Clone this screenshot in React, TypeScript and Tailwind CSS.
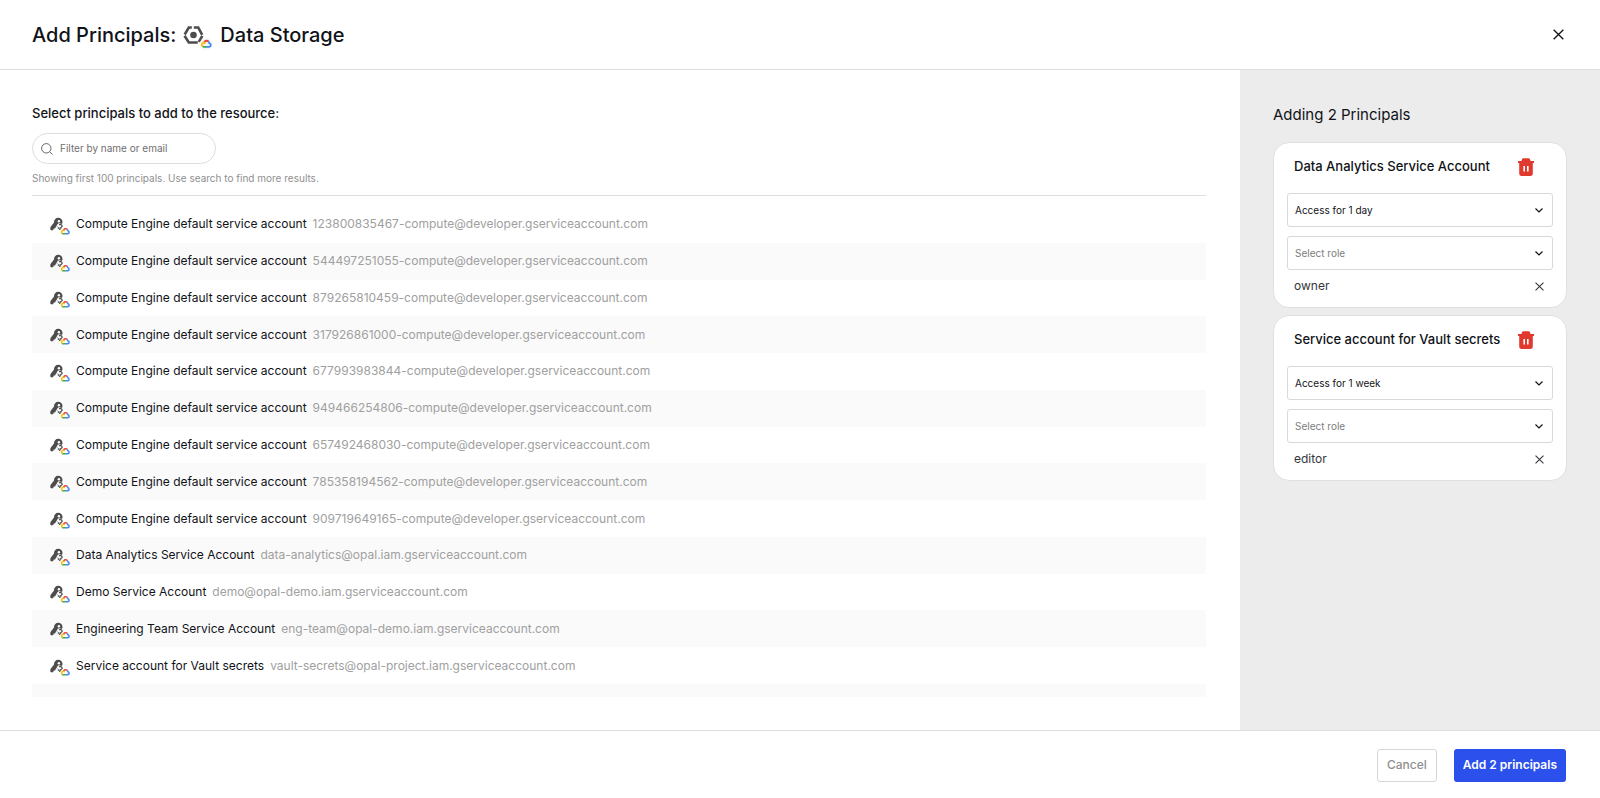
import React from "react";

type Principal = { name: string; email: string };
type Selection = { name: string; access: string; role: string };

const principals: Principal[] = [
  { name: "Compute Engine default service account", email: "123800835467-compute@developer.gserviceaccount.com" },
  { name: "Compute Engine default service account", email: "544497251055-compute@developer.gserviceaccount.com" },
  { name: "Compute Engine default service account", email: "879265810459-compute@developer.gserviceaccount.com" },
  { name: "Compute Engine default service account", email: "317926861000-compute@developer.gserviceaccount.com" },
  { name: "Compute Engine default service account", email: "677993983844-compute@developer.gserviceaccount.com" },
  { name: "Compute Engine default service account", email: "949466254806-compute@developer.gserviceaccount.com" },
  { name: "Compute Engine default service account", email: "657492468030-compute@developer.gserviceaccount.com" },
  { name: "Compute Engine default service account", email: "785358194562-compute@developer.gserviceaccount.com" },
  { name: "Compute Engine default service account", email: "909719649165-compute@developer.gserviceaccount.com" },
  { name: "Data Analytics Service Account", email: "data-analytics@opal.iam.gserviceaccount.com" },
  { name: "Demo Service Account", email: "demo@opal-demo.iam.gserviceaccount.com" },
  { name: "Engineering Team Service Account", email: "eng-team@opal-demo.iam.gserviceaccount.com" },
  { name: "Service account for Vault secrets", email: "vault-secrets@opal-project.iam.gserviceaccount.com" },
];

const selections: Selection[] = [
  { name: "Data Analytics Service Account", access: "Access for 1 day", role: "owner" },
  { name: "Service account for Vault secrets", access: "Access for 1 week", role: "editor" },
];

function CloudLogo({ className }: { className: string }) {
  return (
    <svg viewBox="0 0 24 20" fill="none" strokeWidth="4" className={className} aria-hidden="true">
      <path d="M6.5 8.2A6 6 0 0 1 16.4 5.6" stroke="#ea4335" />
      <path d="M16 5.3A6.2 6.2 0 0 1 18.2 9.3A4.2 4.2 0 0 1 17.8 17.6H12" stroke="#4285f4" />
      <path d="M12.5 17.6H6.4A4.6 4.6 0 0 1 3.4 16.4" stroke="#34a853" />
      <path d="M3.8 16.8A4.7 4.7 0 0 1 7.6 8.4A4.7 4.7 0 0 1 10 9.6" stroke="#fbbc05" />
    </svg>
  );
}

function StorageIcon() {
  return (
    <span className="relative mr-2 ml-[7px] block h-6 w-[29px]">
      <svg viewBox="0 0 21 18" className="mt-[3px] h-[18px] w-[21px]" fill="none" aria-hidden="true">
        <g stroke="#4d4d4d" strokeWidth="2.600">
          <path d="M8.800 1.500H5.800L1.700 8.500" />
          <path d="M10.800 1.500h4.400l4 7.400" />
          <path d="M1.500 9.800l4.300 6.700h9" />
          <path d="M19.300 9.800l-3.500 6" />
        </g>
        <circle cx="10.500" cy="9" r="3.300" fill="#4d4d4d" />
      </svg>
      <span className="absolute right-0 -bottom-[3px] flex h-3 w-3 items-center justify-center rounded-full bg-[#f5f5f5]">
        <CloudLogo className="h-[9px] w-[11px]" />
      </span>
    </span>
  );
}

function ServiceAccountIcon() {
  return (
    <span className="relative block h-5 w-5 shrink-0">
      <svg viewBox="0 0 14 15" className="mt-[3px] h-[15px] w-[14px]" aria-hidden="true">
        <path
          d="M8.200.8A4.200 4.200 0 0 1 12.500 5c0 .8-.2 1.500-.6 2.100L9.500 6.300a2.300 2.300 0 0 0-2.500 2L5.900 9.700l-.8 1.700-1.300.2-.6 1.500-1.500.4L.2 12.600l.3-2.600L4 5.400A4.200 4.200 0 0 1 8.200.8Z"
          fill="#4d4d4d"
        />
        <circle cx="8.900" cy="4.200" r="1.200" fill="#fff" />
        <path
          d="M9.200 8a1.700 1.700 0 1 1 1 2.900L9.600 13"
          fill="none"
          stroke="#4d4d4d"
          strokeWidth="1.300"
        />
        <path d="M7.400 9.600l1.200 1.200-.4 1.200" fill="none" stroke="#4d4d4d" />
      </svg>
      <span className="absolute right-0 -bottom-px flex h-[9px] w-[9px] items-center justify-center rounded-full bg-white/80">
        <CloudLogo className="h-2 w-[9px]" />
      </span>
    </span>
  );
}

function Cross({ className }: { className: string }) {
  return (
    <svg viewBox="0 0 10 10" className={className} fill="none" stroke="currentColor" strokeWidth="1.2" aria-hidden="true">
      <path d="M.6.6l8.800 8.800M9.400.6L.6 9.400" />
    </svg>
  );
}

function TrashIcon() {
  return (
    <svg viewBox="0 0 16 18" className="h-[18px] w-4" aria-hidden="true">
      <path
        fill="#e03a2f"
        fillRule="evenodd"
        d="M5.300.2h5.400c.6 0 1 .3 1.200.8l.7 2H16v2h-1.200V15.600c0 1.400-.9 2.400-2.300 2.400h-9c-1.400 0-2.300-1-2.300-2.400V5H0V3h3.400l.7-2c.2-.5.600-.8 1.200-.8ZM5.400 8v5.400h1.600V8H5.400Zm3.600 0v5.400h1.600V8H9Z"
      />
    </svg>
  );
}

function Dropdown({ label, value, muted }: { label: string; value: string; muted?: boolean }) {
  return (
    <div className="grid items-center">
      <select
        aria-label={label}
        className={
          "col-start-1 row-start-1 h-[34px] w-full appearance-none rounded-[3px] border border-[#d9d9d9] bg-white px-[7px] text-[10px] " +
          (muted ? "text-[#7d7d7d]" : "text-[#111318]")
        }
      >
        <option>{value}</option>
      </select>
      <svg
        viewBox="0 0 8 5"
        className="pointer-events-none col-start-1 row-start-1 mr-[10px] h-[5px] w-2 justify-self-end"
        fill="none"
        stroke="#111318"
        strokeWidth="1.2"
        aria-hidden="true"
      >
        <path d="M.5.5L4 4 7.500.5" />
      </svg>
    </div>
  );
}

function SelectionCard({ item }: { item: Selection }) {
  return (
    <section className="rounded-2xl border border-[#e0e0e0] bg-white px-[13px] pt-[7px] pb-3">
      <div className="flex h-[34px] items-center justify-between pr-[19px] pl-[7px]">
        <h3 className="text-[13px] font-medium whitespace-nowrap">{item.name}</h3>
        <button type="button" aria-label={`Remove ${item.name}`}>
          <TrashIcon />
        </button>
      </div>
      <div className="mt-[9px] flex flex-col gap-[9px]">
        <Dropdown label="Access duration" value={item.access} />
        <Dropdown label="Role" value="Select role" muted />
      </div>
      <div className="mt-[7px] flex h-[18px] items-center justify-between pr-[9px] pl-[7px] text-[12px] text-[#33353a]">
        <span>{item.role}</span>
        <button type="button" aria-label={`Remove role ${item.role}`}>
          <Cross className="size-[9px]" />
        </button>
      </div>
    </section>
  );
}

export default function App() {
  return (
    <div className="flex min-h-screen flex-col bg-white font-[Inter,'Liberation_Sans',sans-serif] text-[#111318]">
      <header className="flex h-[70px] shrink-0 items-center justify-between border-b border-[#dedede] pr-9 pl-8">
        <h1 className="flex items-center text-[20px] leading-7 font-medium">
          <span>Add Principals:</span>
          <StorageIcon />
          <span>Data Storage</span>
        </h1>
        <button type="button" aria-label="Close">
          <Cross className="size-[11px]" />
        </button>
      </header>

      <div className="flex flex-1">
        <main className="flex min-w-0 flex-1 flex-col pt-8 pr-[34px] pb-[33px] pl-8">
          <h2 className="text-[13px] leading-[22px] font-medium">Select principals to add to the resource:</h2>
          <label className="mt-[9px] flex h-[31px] w-[184px] items-center gap-[7px] rounded-full border border-[#dedede] px-2">
            <svg viewBox="0 0 12 12" className="size-3 shrink-0" fill="none" stroke="#666" strokeWidth="1" aria-hidden="true">
              <circle cx="5.300" cy="5.300" r="4.700" />
              <path d="M8.700 8.700l2.800 2.800" />
            </svg>
            <input
              type="text"
              aria-label="Filter by name or email"
              placeholder="Filter by name or email"
              className="min-w-0 flex-1 text-[10px] outline-none placeholder:text-[#6f6f6f]"
            />
          </label>
          <p className="mt-[6px] border-b border-[#dedede] pb-[9px] text-[10px] leading-4 text-[#8f8f8f]">
            Showing first 100 principals. Use search to find more results.
          </p>
          <ul className="mt-[10px] grid flex-1 grid-rows-[repeat(13,minmax(36px,1fr))_13px]">
            {principals.map((p) => (
              <li key={p.email} className="flex items-center pl-[18px] text-[12px] even:bg-[#fafafa]">
                <ServiceAccountIcon />
                <span className="ml-[6px]">{p.name}</span>
                <span className="ml-[6px] text-[#a0a0a0]">{p.email}</span>
              </li>
            ))}
            <li className="even:bg-[#fafafa]" />
          </ul>
        </main>

        <aside className="w-[360px] shrink-0 bg-[#ececec] px-[33px] pt-[33px]">
          <h2 className="text-[15px] leading-6">Adding 2 Principals</h2>
          <div className="mt-[15px] flex flex-col gap-[7px]">
            {selections.map((s) => (
              <SelectionCard key={s.name} item={s} />
            ))}
          </div>
        </aside>
      </div>

      <footer className="flex h-[68px] shrink-0 items-center justify-end gap-[17px] border-t border-[#dedede] px-[34px] pt-px">
        <button type="button" className="h-[33px] rounded-[3px] border border-[#d6d6d6] px-[9px] text-[12px] font-medium text-[#8f8f8f]">
          Cancel
        </button>
        <button type="button" className="h-[33px] rounded-[3px] bg-[#2b50ec] px-[9px] text-[12px] font-semibold text-white">
          Add 2 principals
        </button>
      </footer>
    </div>
  );
}
